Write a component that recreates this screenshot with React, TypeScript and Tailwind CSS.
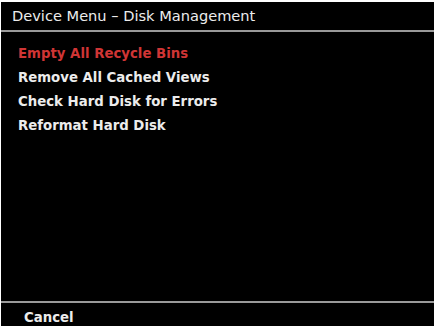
const items = [
  { label: 'Empty All Recycle Bins', active: true },
  { label: 'Remove All Cached Views', active: false },
  { label: 'Check Hard Disk for Errors', active: false },
  { label: 'Reformat Hard Disk', active: false },
];

export default function App() {
  return (
    <div className="h-[326px] w-[434px] bg-white pl-[1px] pt-[2px]">
      <div
        className="flex h-[324px] flex-col bg-black text-[#ececec]"
        style={{ fontFamily: '"DejaVu Sans", Verdana, sans-serif' }}
      >
        <div className="flex h-[28px] items-center pl-[11px] text-[14.6px] leading-none">
          Device Menu – Disk Management
        </div>
        <div className="h-[2px] bg-[#9a9a9a]" />
        <div className="flex flex-1 flex-col pl-[17px] pt-[10px] text-[13.3px] font-bold leading-none">
          {items.map((item) => (
            <div
              key={item.label}
              className={`flex h-[24px] items-center ${item.active ? 'text-[#d03535]' : 'text-[#ececec]'}`}
            >
              {item.label}
            </div>
          ))}
        </div>
        <div className="h-[2px] bg-[#9a9a9a]" />
        <div className="flex h-[23px] items-end pb-[2px] pl-[23px] text-[13.3px] font-bold leading-none">
          Cancel
        </div>
      </div>
    </div>
  );
}
